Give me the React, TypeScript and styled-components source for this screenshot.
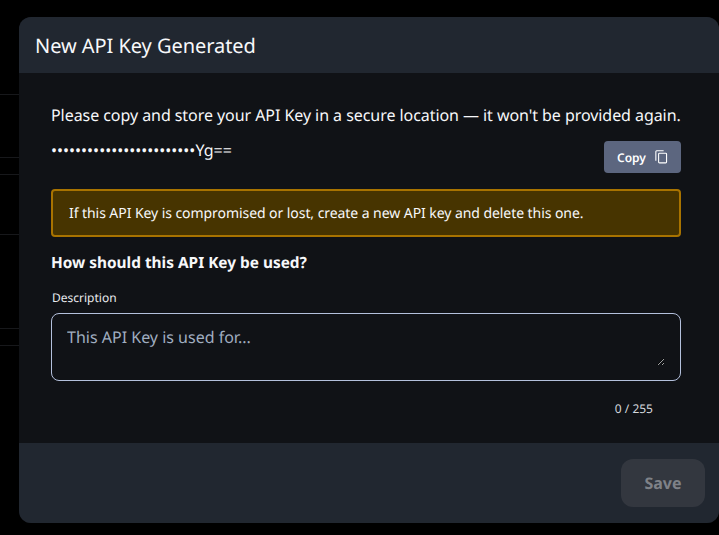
import { createGlobalStyle } from "styled-components";
import styled from "styled-components";

const GlobalStyle = createGlobalStyle`
  html, body {
    margin: 0;
    padding: 0;
    height: 100%;
    background: #000;
  }
  body {
    font-family: "Noto Sans", "Open Sans", sans-serif;
    text-rendering: geometricPrecision;
    overflow: hidden;
  }
`;

const Page = styled.div`
  position: relative;
  width: 719px;
  height: 535px;
  background: #000;
  overflow: hidden;
`;

// what is left of the table behind the overlay
const BackdropRow = styled.div<{ $height: number }>`
  height: ${(p) => p.$height}px;
  border-bottom: 1px solid #17181b;
  box-sizing: border-box;
`;

const Modal = styled.div`
  position: absolute;
  left: 19px;
  top: 17px;
  width: 700px;
  height: 506px;
  display: flex;
  flex-direction: column;
  border-radius: 12px;
  overflow: hidden;
  background: #101216;
  color: #f7f8fa;
`;

const Header = styled.header`
  height: 56px;
  flex: none;
  display: flex;
  align-items: center;
  padding: 0 16px;
  background: #212730;
  font-size: 20px;
  font-weight: 400;
  letter-spacing: -0.05px;
`;

const Body = styled.div`
  flex: 1;
  padding: 32px 38px 0 32px;
`;

const Intro = styled.p`
  margin: 0;
  font-size: 16px;
  line-height: 20px;
  letter-spacing: -0.06px;
  white-space: nowrap;
`;

const KeyRow = styled.div`
  display: flex;
  justify-content: space-between;
  align-items: flex-start;
  margin-top: 16px;
`;

const KeyValue = styled.span`
  font-size: 16px;
  line-height: 18px;
`;

const CopyButton = styled.button`
  display: flex;
  align-items: center;
  gap: 8px;
  height: 32px;
  width: 77px;
  padding: 0 12px 0 13px;
  box-sizing: border-box;
  border: 0;
  border-radius: 4px;
  background: #5c667f;
  color: #fff;
  font-family: inherit;
  font-size: 12px;
  font-weight: 600;
  text-rendering: inherit;
`;

const Alert = styled.div`
  margin-top: 16px;
  height: 48px;
  box-sizing: border-box;
  display: flex;
  align-items: center;
  padding: 0 16px;
  border: 2px solid #a87300;
  border-radius: 4px;
  background: #473400;
  font-size: 14px;
  letter-spacing: -0.065px;
`;

const SectionTitle = styled.h2`
  margin: 16px 0 0;
  font-size: 15.4px;
  line-height: 20px;
  font-weight: 700;
`;

const FieldLabel = styled.label`
  display: block;
  margin: 16px 0 7px 1px;
  font-size: 12px;
  line-height: 17px;
  color: #e8eaee;
`;

const InputFrame = styled.div`
  padding: 11px 15px 14px;
  border: 1px solid #b4c0dc;
  border-radius: 8px;
`;

const DescriptionInput = styled.textarea`
  display: block;
  width: 100%;
  height: 41px;
  box-sizing: border-box;
  padding: 0;
  border: 0;
  background: transparent;
  color: #f7f8fa;
  font-family: inherit;
  font-size: 16px;
  line-height: 24px;
  resize: vertical;
  outline: none;
  text-rendering: inherit;
  &::placeholder {
    color: #a0aec0;
    opacity: 1;
  }
`;

const Counter = styled.div`
  margin-top: 19px;
  padding-right: 28px;
  text-align: right;
  font-size: 12px;
  line-height: 17px;
  color: #d5d8de;
`;

const Footer = styled.footer`
  height: 80px;
  flex: none;
  display: flex;
  justify-content: flex-end;
  align-items: center;
  padding: 0 14px 0 16px;
  background: #212730;
`;

const SaveButton = styled.button`
  width: 84px;
  height: 48px;
  border: 0;
  border-radius: 12px;
  background: #33373f;
  color: #7f8288;
  font-family: inherit;
  font-size: 16px;
  font-weight: 700;
  text-rendering: inherit;
`;

const CopyIcon = () => (
  <svg width="18" height="18" viewBox="0 0 18 18" fill="none" stroke="currentColor" strokeWidth="1.3">
    <path d="M2.2 13.5V2.6a1 1 0 0 1 1-1h8.3" />
    <rect x="5.5" y="4.5" width="9.5" height="11.5" rx="1" />
  </svg>
);

const backdropRows = [95, 63, 17, 60, 94, 17];

export default function App() {
  return (
    <Page>
      <GlobalStyle />
      {backdropRows.map((height, i) => (
        <BackdropRow key={i} $height={height} />
      ))}
      <Modal>
        <Header>New API Key Generated</Header>
        <Body>
          <Intro>
            Please copy and store your API Key in a secure location — it won't be provided again.
          </Intro>
          <KeyRow>
            <KeyValue>••••••••••••••••••••••••Yg==</KeyValue>
            <CopyButton>
              Copy <CopyIcon />
            </CopyButton>
          </KeyRow>
          <Alert>If this API Key is compromised or lost, create a new API key and delete this one.</Alert>
          <SectionTitle>How should this API Key be used?</SectionTitle>
          <FieldLabel>Description</FieldLabel>
          <InputFrame>
            <DescriptionInput placeholder="This API Key is used for..." />
          </InputFrame>
          <Counter>0 / 255</Counter>
        </Body>
        <Footer>
          <SaveButton disabled>Save</SaveButton>
        </Footer>
      </Modal>
    </Page>
  );
}
